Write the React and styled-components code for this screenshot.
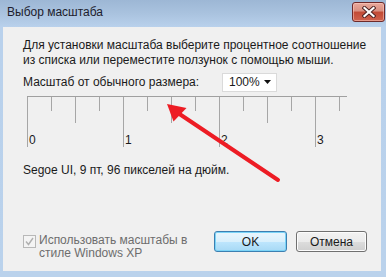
import styled, { createGlobalStyle } from "styled-components";

const Global = createGlobalStyle`
  body {
    margin: 0;
    background: #ffffff;
    font-family: "Liberation Sans", Arial, sans-serif;
  }
`;

const Window = styled.div`
  position: relative;
  width: 386px;
  height: 277px;
  display: flex;
  flex-direction: column;
  background: linear-gradient(to bottom, #9db7d5 0px, #aac3df 14px, #b9d1ec 27px, #bad2ec 100%);
  padding: 0 5px 6px 3px;
  box-sizing: border-box;
  overflow: hidden;
`;

const TitleBar = styled.div`
  height: 27px;
  display: flex;
  align-items: center;
  justify-content: space-between;
  padding-left: 4px;
  padding-bottom: 3px;
  box-sizing: border-box;
`;

const Title = styled.span`
  font-size: 12px;
  color: #1c1c2c;
`;

const CloseButton = styled.div`
  width: 31px;
  height: 18px;
  margin-right: -4px;
  border: 1px solid #6e2a2a;
  border-radius: 3px;
  background: linear-gradient(to bottom, #e9a99c 0%, #d98f80 45%, #c24a35 50%, #d0624e 100%);
  display: flex;
  align-items: center;
  justify-content: center;
  box-shadow: inset 0 0 0 1px rgba(255, 210, 200, 0.5);
`;

const Client = styled.div`
  flex: 1;
  background: #f0f0f0;
  display: flex;
  flex-direction: column;
  padding: 11px 14px 11px 20px;
  font-size: 12px;
  color: #1a1a1a;
`;

const Para = styled.p`
  margin: 0;
  line-height: 15px;
  white-space: nowrap;
`;

const ScaleRow = styled.div`
  display: flex;
  align-items: center;
  margin-top: 4px;
  height: 20px;
`;

const Label = styled.span`
  width: 199px;
  white-space: nowrap;
`;

const Combo = styled.div`
  width: 55px;
  height: 19px;
  box-sizing: border-box;
  background: #ffffff;
  border: 1px solid #dadada;
  display: flex;
  align-items: center;
  justify-content: space-between;
  padding: 0 5px 0 6px;
`;

const Ruler = styled.div`
  margin-top: 4px;
  margin-left: 4px;
  width: 320px;
  border-top: 1px solid #a0a0a0;
  display: flex;
  align-items: flex-start;
`;

const Tick = styled.div`
  flex-shrink: 0;
  width: 24px;
  height: ${(p) => p.$h}px;
  border-left: 1px solid #a6a6a6;
  box-sizing: border-box;
  display: flex;
  align-items: flex-end;
  padding-left: 1px;
  font-size: 12px;
  line-height: 13px;
`;

const Info = styled.div`
  margin-top: 16px;
  line-height: 15px;
`;

const Footer = styled.div`
  margin-top: auto;
  display: flex;
  align-items: flex-start;
`;

const CheckWrap = styled.div`
  flex: 1;
  display: flex;
  align-items: flex-start;
  padding-top: 4px;
  color: #6d6d6d;
`;

const CheckBox = styled.div`
  width: 13px;
  height: 13px;
  box-sizing: border-box;
  border: 1px solid #b8b8b8;
  background: #f4f4f4;
  display: flex;
  align-items: center;
  justify-content: center;
  margin-right: 3px;
`;

const CheckLabel = styled.span`
  line-height: 13px;
  margin-top: -1px;
`;

const Button = styled.div`
  width: ${(p) => p.$w}px;
  height: 21px;
  box-sizing: border-box;
  margin-left: 9px;
  border-radius: 3px;
  border: 1px solid ${(p) => (p.$default ? "#3c7fb1" : "#707070")};
  background: ${(p) =>
    p.$default
      ? "linear-gradient(to bottom, #eaf6fd 0%, #d9f0fc 50%, #bee6fd 51%, #a7d9f5 100%)"
      : "linear-gradient(to bottom, #f2f2f2 0%, #ebebeb 50%, #dddddd 51%, #cfcfcf 100%)"};
  box-shadow: inset 0 0 0 1px ${(p) => (p.$default ? "#7bd4f7" : "#fcfcfc")};
  display: flex;
  align-items: center;
  justify-content: center;
  color: #1a1a1a;
`;

const Arrow = styled.svg`
  position: absolute;
  left: 0;
  top: 0;
  pointer-events: none;
`;

const tickHeight = (i) => (i % 4 === 0 ? 50 : i % 2 === 0 ? 26 : 14);

export default function App() {
  return (
    <Window>
      <Global />
      <TitleBar>
        <Title>Выбор масштаба</Title>
        <CloseButton>
          <svg width="14" height="12" viewBox="0 0 14 12">
            <path d="M2.5 2 L11.5 10 M11.5 2 L2.5 10" stroke="#4a2020" strokeWidth="4" strokeLinecap="square" />
            <path d="M2.5 2 L11.5 10 M11.5 2 L2.5 10" stroke="#ffffff" strokeWidth="2.2" strokeLinecap="square" />
          </svg>
        </CloseButton>
      </TitleBar>
      <Client>
        <Para>
          Для установки масштаба выберите процентное соотношение
          <br />
          из списка или переместите ползунок с помощью мыши.
        </Para>
        <ScaleRow>
          <Label>Масштаб от обычного размера:</Label>
          <Combo>
            <span>100%</span>
            <svg width="7" height="4" viewBox="0 0 7 4">
              <path d="M0 0 H7 L3.5 4 Z" fill="#111" />
            </svg>
          </Combo>
        </ScaleRow>
        <Ruler>
          {Array.from({ length: 14 }, (_, i) => (
            <Tick key={i} $h={tickHeight(i)}>
              {i % 4 === 0 ? i / 4 : null}
            </Tick>
          ))}
        </Ruler>
        <Info>Segoe UI, 9 пт, 96 пикселей на дюйм.</Info>
        <Footer>
          <CheckWrap>
            <CheckBox>
              <svg width="9" height="9" viewBox="0 0 9 9">
                <path d="M1 4.5 L3.5 7.5 L8 1" stroke="#b0b0b0" strokeWidth="1.4" fill="none" />
              </svg>
            </CheckBox>
            <CheckLabel>
              Использовать масштабы в
              <br />
              стиле Windows XP
            </CheckLabel>
          </CheckWrap>
          <Button $default $w={73}>OK</Button>
          <Button $w={71}>Отмена</Button>
        </Footer>
      </Client>
      <Arrow width="386" height="277" viewBox="0 0 386 277">
        <path d="M278 180 L178 113" stroke="#ed1c24" strokeWidth="4" strokeLinecap="round" />
        <path d="M167 104 L173.5 121.5 L186.5 108 Z" fill="#ed1c24" />
      </Arrow>
    </Window>
  );
}
